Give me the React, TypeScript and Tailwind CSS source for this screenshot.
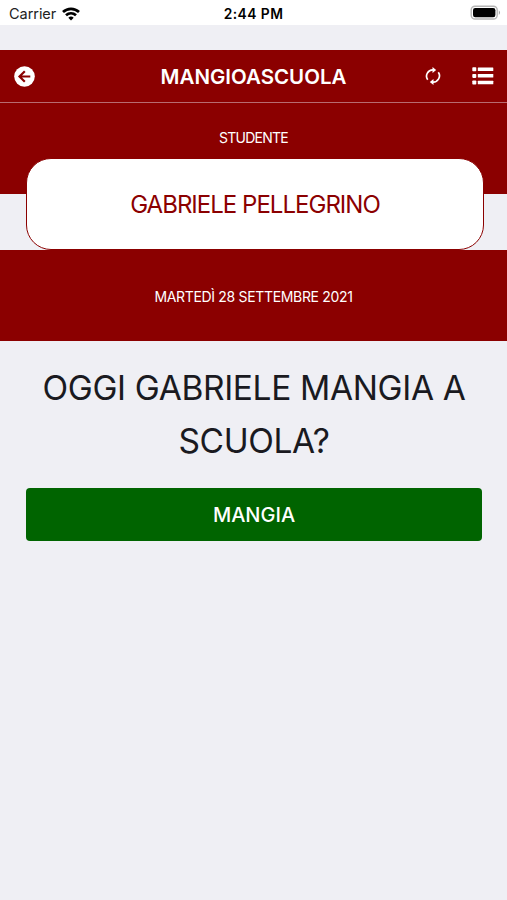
import React from "react";

function WifiIcon() {
  return (
    <svg className="h-[14px] w-[18px]" viewBox="0 0 18 14" fill="none" stroke="#000" strokeWidth="2.7">
      <path d="M1 5.1C5.5.8 12.500.8 17 5.1" />
      <path d="M4 8.300C6.900 5.600 11.100 5.600 14 8.300" />
      <path d="M6.300 10.700Q9 8.400 11.700 10.700L9 13.400Z" fill="#000" stroke="none" />
    </svg>
  );
}

function BatteryIcon() {
  return (
    <svg className="h-[16px] w-[32px]" viewBox="0 0 32 16">
      <rect x="1.200" y="1.200" width="26" height="12.800" rx="3.800" fill="#fff" stroke="#b5b5b5" strokeWidth="1.400" />
      <rect x="3" y="3" width="22.400" height="9.200" rx="2.200" fill="#000" />
      <path d="M28.800 5.300Q31.300 7.600 28.800 9.900Z" fill="#a5a5a5" />
    </svg>
  );
}

function BackIcon() {
  return (
    <svg className="h-[21px] w-[21px]" viewBox="0 0 21 21">
      <circle cx="10.500" cy="10.500" r="10.300" fill="#fff" />
      <path d="M10.800 5.200L5.500 10.500L10.800 15.800M5.800 10.500H16.300" fill="none" stroke="#8b0000" strokeWidth="2.200" />
    </svg>
  );
}

function RefreshIcon() {
  return (
    <svg className="h-[18px] w-[16px]" viewBox="0 0 16 18" fill="none" stroke="#fff" strokeWidth="1.700">
      <path d="M2.700 12.800A6.300 6.300 0 0 1 8.300 2.900" />
      <path d="M13.300 5.200A6.300 6.300 0 0 1 7.700 15.100" />
      <path d="M7.500 0L11.200 2.900L7.500 6.100Z" fill="#fff" stroke="none" />
      <path d="M8.500 11.900L4.800 15.100L8.500 18Z" fill="#fff" stroke="none" />
    </svg>
  );
}

function ListIcon() {
  return (
    <svg className="h-[18px] w-[22px]" viewBox="0 0 22 18" fill="#fff">
      <rect x="0.300" y="0.300" width="4" height="4" rx="0.800" />
      <rect x="0.300" y="6.900" width="4" height="4" rx="0.800" />
      <rect x="0.300" y="13.500" width="4" height="4" rx="0.800" />
      <rect x="5.800" y="0.500" width="15.500" height="3.500" rx="0.500" />
      <rect x="5.800" y="7.100" width="15.500" height="3.500" rx="0.500" />
      <rect x="5.800" y="13.700" width="15.500" height="3.500" rx="0.500" />
    </svg>
  );
}

export default function App() {
  return (
    <div className="flex min-h-screen flex-col bg-[#efeff4] font-['Inter',sans-serif]">
      <div className="grid h-[25px] grid-cols-3 items-center bg-white text-black">
        <div className="flex items-center gap-[6px] pt-[2px] pl-[9px] text-[14.500px] leading-5 tracking-[-0.05px] text-[#222]">
          <span>Carrier</span>
          <WifiIcon />
        </div>
        <div className="pt-[2px] text-center text-[13.800px] leading-5 font-semibold tracking-[0.45px]">2:44 PM</div>
        <div className="flex justify-end pt-px pr-[5px]">
          <BatteryIcon />
        </div>
      </div>

      <header className="mt-[25px] grid h-[53px] grid-cols-[1fr_auto_1fr] items-center border-b border-[#b86b70] bg-[#8b0000] text-white">
        <div className="pl-[14px]">
          <BackIcon />
        </div>
        <h1 className="pt-[2px] text-[20.500px] leading-7 font-semibold">MANGIOASCUOLA</h1>
        <div className="flex items-center justify-end gap-[31px] pr-[13px]">
          <RefreshIcon />
          <ListIcon />
        </div>
      </header>

      <section className="h-[91px] bg-[#8b0000] pt-[25px] text-center text-[14px] leading-5 font-normal tracking-[-0.75px] text-white">
        STUDENTE
      </section>
      <div className="relative mr-[23px] ml-[26px] -mt-[36px] flex h-[92px] shrink-0 items-center justify-center rounded-[25px] border border-[#8b0000] bg-white pt-[2px] text-[24px] font-normal tracking-[-0.98px] text-[#8b0000]">
        GABRIELE PELLEGRINO
      </div>
      <section className="flex h-[91px] items-center justify-center bg-[#8b0000] pt-px text-[14px] font-normal tracking-[-0.33px] text-white">
        MARTEDÌ 28 SETTEMBRE 2021
      </section>

      <main className="pt-[21px] pr-[25px] pl-[26px]">
        <h2 className="text-center text-[33.500px] leading-[52.500px] font-normal tracking-[-0.35px] text-[#1a1a1f]">
          OGGI GABRIELE MANGIA A<br />
          SCUOLA?
        </h2>
        <button className="mt-[21px] flex h-[53px] w-full items-center justify-center rounded-[4px] bg-[#006400] text-[20px] font-medium text-white">
          MANGIA
        </button>
      </main>
    </div>
  );
}
